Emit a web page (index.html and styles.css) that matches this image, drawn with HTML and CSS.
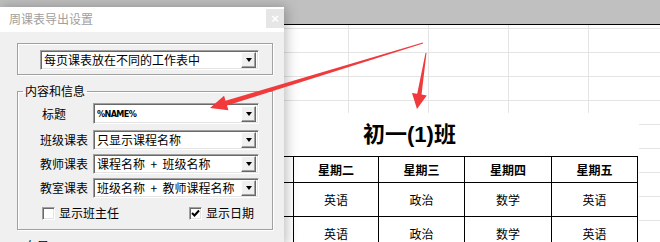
FILE: index.html
```html
<!DOCTYPE html>
<html lang="zh-CN">
<head>
    <meta charset="UTF-8">
    <title>周课表导出设置</title>
    <link rel="stylesheet" href="styles.css">
</head>
<body>
    <div class="app">
        <div class="toolbar"></div>
        <div class="sheet">
            <div class="print">
                <div class="sheet-title">初一(1)班</div>
                <table class="timetable">
                    <colgroup>
                        <col class="c1"><col class="c2"><col class="c3"><col class="c4"><col class="c5"><col class="c6">
                    </colgroup>
                    <tr><th>节次</th><th>星期一</th><th>星期二</th><th>星期三</th><th>星期四</th><th>星期五</th></tr>
                    <tr><td>1</td><td>语文</td><td>英语</td><td>政治</td><td>数学</td><td>英语</td></tr>
                    <tr><td>2</td><td>语文</td><td>英语</td><td>政治</td><td>数学</td><td>英语</td></tr>
                </table>
            </div>
        </div>

        <div class="dialog">
            <div class="titlebar">
                <span class="caption">周课表导出设置</span>
                <span class="close">×</span>
            </div>
            <div class="dialog-body">
                <div class="group group-plain">
                    <div class="combo wide">
                        <span class="combo-text">每页课表放在不同的工作表中</span>
                        <span class="combo-btn"></span>
                    </div>
                </div>

                <fieldset class="group">
                    <legend>内容和信息</legend>
                    <div class="form-rows">
                        <label class="lbl lbl-short">标题</label>
                        <div class="combo tall">
                            <span class="combo-text code">%NAME%</span>
                            <span class="combo-btn"></span>
                        </div>
                        <label class="lbl">班级课表</label>
                        <div class="combo">
                            <span class="combo-text">只显示课程名称</span>
                            <span class="combo-btn"></span>
                        </div>
                        <label class="lbl">教师课表</label>
                        <div class="combo">
                            <span class="combo-text">课程名称 &nbsp;+ &nbsp;班级名称</span>
                            <span class="combo-btn"></span>
                        </div>
                        <label class="lbl">教室课表</label>
                        <div class="combo">
                            <span class="combo-text">班级名称 &nbsp;+ &nbsp;教师课程名称</span>
                            <span class="combo-btn"></span>
                        </div>
                    </div>
                    <div class="checks">
                        <label class="check"><span class="box"></span>显示班主任</label>
                        <label class="check"><span class="box checked"><svg width="9" height="9" viewBox="0 0 9 9"><path d="M1 4 L3.5 6.5 L8 1.5" fill="none" stroke="#000" stroke-width="2"/></svg></span>显示日期</label>
                    </div>
                </fieldset>

                <fieldset class="group">
                    <legend>布局</legend>
                </fieldset>
            </div>
        </div>

        <svg class="arrows" width="660" height="242" viewBox="0 0 660 242">
            <polygon fill="#f03a3c" points="423.12,43.38 226.99,105.43 228.45,110.21 210,108 224.07,95.87 225.53,100.65 422.88,42.62"/>
            <polygon fill="#f03a3c" points="426.49,53.08 421.55,94.54 426.78,95.38 417,109 411.98,93.0 417.21,93.84 425.51,52.92"/>
        </svg>
    </div>
</body>
</html>
```

FILE: styles.css
```css
body {
    margin: 0;
    font-family: "Noto Sans CJK SC", sans-serif;
    font-size: 12px;
    color: #000;
}
.app {
    position: relative;
    width: 660px;
    height: 242px;
    overflow: hidden;
    background: #fff;
}
.toolbar {
    height: 24px;
    background: #c0c0c0;
    border-bottom: 1px solid #000;
}
.sheet {
    height: 217px;
    background-color: #fff;
    background-image:
        linear-gradient(to right, #e4e4e4 1px, transparent 1px),
        linear-gradient(to bottom, #e4e4e4 1px, transparent 1px);
    background-size: 80px 24px;
    background-position: 28px 3px;
    padding-top: 88px;
    box-sizing: border-box;
}
.print {
    margin-left: 120px;
    width: 519px;
    background: #fff;
}
.sheet-title {
    height: 43px;
    line-height: 43px;
    padding-left: 243px;
    font-family: "Liberation Sans", "Noto Sans CJK SC", sans-serif;
    font-weight: bold;
    font-size: 22px;
}
.timetable {
    border-collapse: collapse;
    table-layout: fixed;
    width: 517px;
    margin-left: 1px;
}
.c1, .c2 { width: 86px; }
.c3 { width: 85px; }
.c4 { width: 86px; }
.c5 { width: 87px; }
.c6 { width: 86px; }
.timetable th,
.timetable td {
    border: 1px solid #000;
    padding: 0;
    text-align: center;
    font-size: 12px;
}
.timetable th {
    height: 25px;
    font-weight: bold;
}
.timetable td {
    height: 33px;
}

/* dialog */
.dialog {
    position: absolute;
    left: 0;
    top: 7px;
    width: 284px;
    height: 240px;
    background: #f0f0f0;
    box-shadow: 2px 0 12px rgba(0, 0, 0, 0.28);
}
.titlebar {
    height: 25px;
    background: #fff;
    display: flex;
    justify-content: space-between;
    align-items: flex-start;
}
.caption {
    padding-left: 9px;
    line-height: 22px;
    padding-top: 1px;
    color: #a0a0a0;
}
.close {
    margin-top: 2px;
    width: 18px;
    height: 19px;
    background: #e6e6e6;
    color: #fff;
    font-family: "Liberation Sans", sans-serif;
    font-size: 13px;
    font-weight: bold;
    line-height: 19px;
    text-align: center;
}
.dialog-body {
    padding: 11px 11px 0 17px;
}
.group {
    margin: 0;
    width: 256px;
    box-sizing: border-box;
    border: 1px solid #a0a0a0;
    box-shadow: 1px 1px 0 #fff, inset 1px 1px 0 #fff;
    padding: 0;
    margin-top: 9px;
}
.group-plain {
    margin-top: 0;
    height: 32px;
    padding: 6px 13px 0 22px;
}
legend {
    margin-left: 5px;
    padding: 0 2px;
    line-height: 14px;
}

.combo {
    display: flex;
    align-items: center;
    height: 20px;
    box-sizing: border-box;
    background: #fff;
    border: 1px solid;
    border-color: #a0a0a0 #fff #fff #a0a0a0;
    box-shadow: inset 1px 1px 0 #696969, inset -1px -1px 0 #e3e3e3;
    padding: 0 2px 0 3px;
}
.combo.tall { height: 21px; }
.combo-text {
    flex: 1;
    min-width: 0;
    white-space: nowrap;
    overflow: hidden;
    line-height: 16px;
}
.combo-text.code {
    font-family: "DejaVu Sans Condensed", "DejaVu Sans", sans-serif;
    font-weight: bold;
    font-size: 9px;
    letter-spacing: -0.6px;
}
.combo-btn {
    flex: none;
    width: 15px;
    height: 16px;
    box-sizing: border-box;
    background: #f0f0f0;
    border: 1px solid;
    border-color: #fff #696969 #696969 #fff;
    box-shadow: inset -1px -1px 0 #a0a0a0;
    display: flex;
    align-items: center;
    justify-content: center;
}
.combo-btn::after {
    content: "";
    border-left: 3.5px solid transparent;
    border-right: 3.5px solid transparent;
    border-top: 4px solid #000;
}

.form-rows {
    display: grid;
    grid-template-columns: 53px 166px;
    row-gap: 4px;
    padding: 5px 0 0 22px;
}
.form-rows .combo.tall { margin-bottom: 2px; }
.lbl {
    line-height: 20px;
}
.lbl-short {
    padding-left: 2px;
    line-height: 21px;
}
.checks {
    display: flex;
    justify-content: space-between;
    padding: 8px 18px 9px 24px;
}
.check {
    display: flex;
    align-items: center;
    gap: 4px;
    line-height: 14px;
}
.box {
    width: 13px;
    height: 13px;
    box-sizing: border-box;
    background: #fff;
    border: 1px solid;
    border-color: #a0a0a0 #fff #fff #a0a0a0;
    box-shadow: inset 1px 1px 0 #696969, inset -1px -1px 0 #e3e3e3;
    display: flex;
    align-items: center;
    justify-content: center;
}

.arrows {
    position: absolute;
    left: 0;
    top: 0;
}
```
